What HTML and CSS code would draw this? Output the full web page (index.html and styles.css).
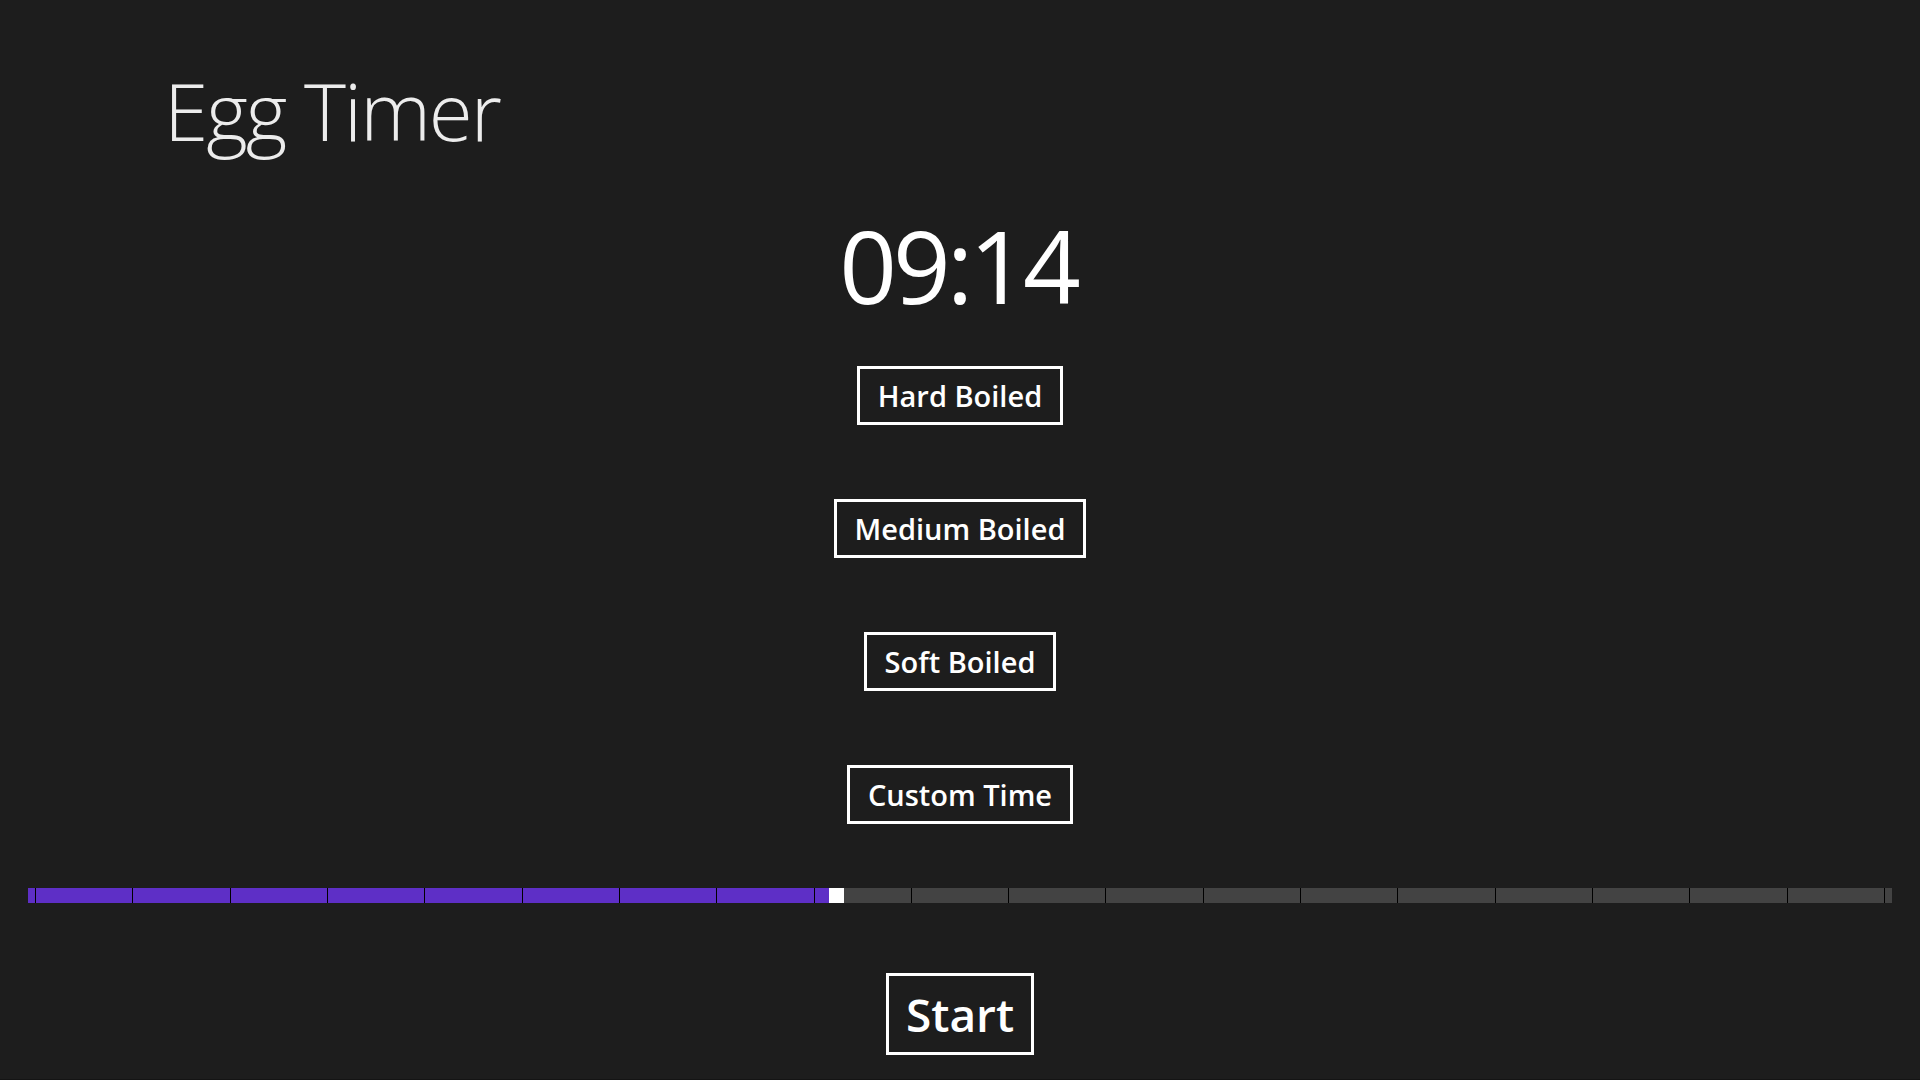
FILE: index.html
```html
<!DOCTYPE html>
<html lang="en">
<head>
<meta charset="utf-8">
<title>Egg Timer</title>
<link rel="stylesheet" href="styles.css">
</head>
<body>
<div class="page">
  <h1 class="title">Egg Timer</h1>
  <div class="clock">09:14</div>
  <div class="presets">
    <button class="btn">Hard Boiled</button>
    <button class="btn">Medium Boiled</button>
    <button class="btn">Soft Boiled</button>
    <button class="btn">Custom Time</button>
  </div>
  <div class="slider">
    <div class="track">
      <div class="fill" style="width:801px"></div>
      <div class="thumb"></div>
      <div class="rest"></div>
    </div>
    <div class="ticks">
      <span></span><span></span><span></span><span></span><span></span>
      <span></span><span></span><span></span><span></span><span></span>
      <span></span><span></span><span></span><span></span><span></span>
      <span></span><span></span><span></span><span></span><span></span>
    </div>
  </div>
  <div class="actions">
    <button class="btn btn-start">Start</button>
  </div>
</div>
</body>
</html>
```
FILE: styles.css
```css
html, body {
  margin: 0;
  padding: 0;
  background: #1d1d1d;
}
.page {
  height: 1079px;
  border-bottom: 1px solid #141414;
  display: flex;
  flex-direction: column;
  font-family: "Open Sans", "Noto Sans", sans-serif;
  color: #ffffff;
}
.title {
  margin: 0;
  padding: 70px 0 0 164px;
  font-weight: 300;
  font-size: 80px;
  line-height: 80px;
  letter-spacing: -2px;
  color: #ececec;
}
.clock {
  margin-top: 65px;
  text-align: center;
  font-weight: 400;
  font-size: 101px;
  line-height: 101px;
  letter-spacing: -4px;
  padding-right: 4px;
}
.presets {
  margin-top: 50px;
  display: flex;
  flex-direction: column;
  align-items: center;
  gap: 74px;
}
.btn {
  font-family: "Open Sans", "Noto Sans", sans-serif;
  font-weight: 600;
  font-size: 29px;
  line-height: 53px;
  color: #ffffff;
  background: transparent;
  border: 3px solid #ffffff;
  border-radius: 0;
  padding: 0 18px;
  margin: 0;
}
.slider {
  margin: 64px 28px 0 28px;
  display: grid;
  height: 15px;
}
.track, .ticks {
  grid-area: 1 / 1;
}
.track {
  display: flex;
}
.fill {
  background: #5e2fc6;
}
.thumb {
  width: 15px;
  background: #ffffff;
}
.rest {
  flex: 1;
  background: #434343;
}
.ticks {
  display: flex;
  justify-content: space-between;
  padding: 0 7px;
}
.ticks span {
  width: 1px;
  background: #000000;
}
.actions {
  margin-top: 70px;
  display: flex;
  justify-content: center;
}
.btn-start {
  font-size: 46px;
  line-height: 76px;
  padding: 0 17px;
}
```
